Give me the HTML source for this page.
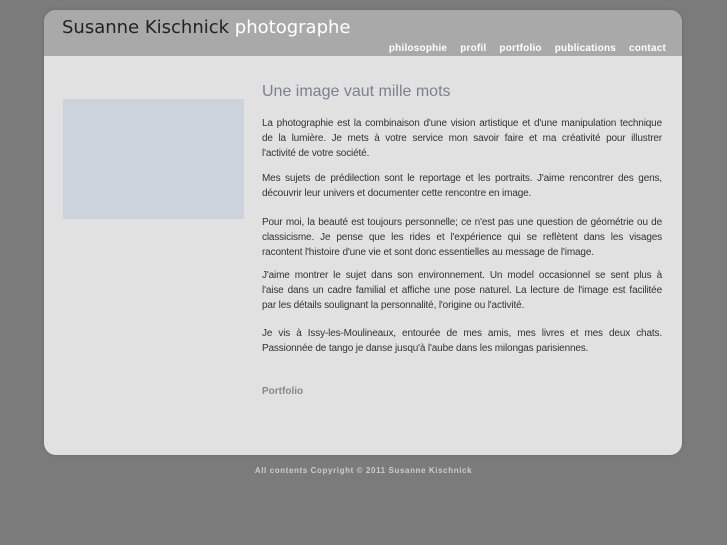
<!DOCTYPE html>
<html><head><meta charset="utf-8"><style>
body{margin:0;width:727px;height:545px;background:#7b7b7b;font-family:"Liberation Sans",sans-serif;position:relative;overflow:hidden}
#box{position:absolute;left:44px;top:10px;width:638px;height:445px;background:#e1e1e1;border-radius:12px;overflow:hidden;box-shadow:0 0 3px #666}
#hd{position:absolute;left:0;top:0;width:638px;height:46px;background:#a9a9a9}
#t{position:absolute;left:18px;top:7px;font-family:"DejaVu Sans",sans-serif;font-size:18px;color:#222;white-space:nowrap}
#t span{color:#fff}
#nav{position:absolute;right:16px;top:33px;font-size:10px;font-weight:bold;color:#fff;letter-spacing:0.2px}
#nav span{margin-left:13px}
#img{position:absolute;left:19px;top:89px;width:181px;height:120px;background:#cdd3dc}
#c{position:absolute;left:218px;top:72px;width:400px;font-size:10px;line-height:15px;color:#333;letter-spacing:-0.15px}
.p div{text-align:justify;text-align-last:justify;height:15px;overflow:visible}
.p div.l{text-align-last:left}
h1{font-size:16px;font-weight:normal;color:#7a828e;margin:0 0 14px 0;line-height:20px;letter-spacing:0}
.p{margin:0 0 10px 0}
#pf{font-weight:bold;color:#888;margin-top:28px;letter-spacing:0}
#ft{position:absolute;left:0;width:727px;top:466px;text-align:center;font-size:8px;font-weight:bold;color:#ccc;letter-spacing:0.6px}
</style></head><body>
<div id="box">
<div id="hd"><div id="t">Susanne Kischnick <span>photographe</span></div>
<div id="nav"><span>philosophie</span><span>profil</span><span>portfolio</span><span>publications</span><span>contact</span></div></div>
<div id="img"></div>
<div id="c">
<h1>Une image vaut mille mots</h1>
<div class="p"><div>La photographie est la combinaison d'une vision artistique et d'une manipulation technique</div><div>de la lumière. Je mets à votre service mon savoir faire et ma créativité pour illustrer</div><div class="l">l'activité de votre société.</div></div>
<div class="p" style="margin-bottom:14px"><div>Mes sujets de prédilection sont le reportage et les portraits. J'aime rencontrer des gens,</div><div class="l">découvrir leur univers et documenter cette rencontre en image.</div></div>
<div class="p" style="margin-bottom:8px"><div>Pour moi, la beauté est toujours personnelle; ce n'est pas une question de géométrie ou de</div><div>classicisme. Je pense que les rides et l'expérience qui se reflètent dans les visages</div><div class="l">racontent l'histoire d'une vie et sont donc essentielles au message de l'image.</div></div>
<div class="p" style="margin-bottom:13px"><div>J'aime montrer le sujet dans son environnement. Un model occasionnel se sent plus à</div><div>l'aise dans un cadre familial et affiche une pose naturel. La lecture de l'image est facilitée</div><div class="l">par les détails soulignant la personnalité, l'origine ou l'activité.</div></div>
<div class="p"><div>Je vis à Issy-les-Moulineaux, entourée de mes amis, mes livres et mes deux chats.</div><div class="l">Passionnée de tango je danse jusqu'à l'aube dans les milongas parisiennes.</div></div>
<div class="p" id="pf">Portfolio</div>
</div>
</div>
<div id="ft">All contents Copyright © 2011 Susanne Kischnick</div>
</body></html>
